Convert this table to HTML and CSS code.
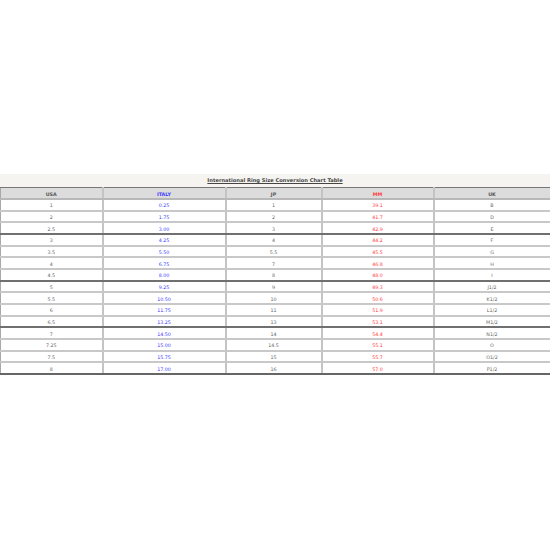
FILE: index.html
```html
<!DOCTYPE html>
<html>
<head>
<meta charset="utf-8">
<link rel="stylesheet" href="styles.css">
</head>
<body>
<div class="page">
  <div class="caption">International Ring Size Conversion Chart Table</div>
  <table class="chart">
    <colgroup>
      <col class="c1"><col class="c2"><col class="c3"><col class="c4"><col class="c5">
    </colgroup>
    <thead>
      <tr><th>USA</th><th class="it">ITALY</th><th>JP</th><th class="mm">MM</th><th>UK</th></tr>
    </thead>
    <tbody>
      <tr><td>1</td><td class="it">0.25</td><td>1</td><td class="mm">39.1</td><td>B</td></tr>
      <tr><td>2</td><td class="it">1.75</td><td>2</td><td class="mm">41.7</td><td>D</td></tr>
      <tr class="end"><td>2.5</td><td class="it">3.00</td><td>3</td><td class="mm">42.9</td><td>E</td></tr>
      <tr><td>3</td><td class="it">4.25</td><td>4</td><td class="mm">44.2</td><td>F</td></tr>
      <tr><td>3.5</td><td class="it">5.50</td><td>5.5</td><td class="mm">45.5</td><td>G</td></tr>
      <tr><td>4</td><td class="it">6.75</td><td>7</td><td class="mm">46.8</td><td>H</td></tr>
      <tr class="end"><td>4.5</td><td class="it">8.00</td><td>8</td><td class="mm">48.0</td><td>I</td></tr>
      <tr><td>5</td><td class="it">9.25</td><td>9</td><td class="mm">49.3</td><td>J1/2</td></tr>
      <tr><td>5.5</td><td class="it">10.50</td><td>10</td><td class="mm">50.6</td><td>K1/2</td></tr>
      <tr><td>6</td><td class="it">11.75</td><td>11</td><td class="mm">51.9</td><td>L1/2</td></tr>
      <tr class="end"><td>6.5</td><td class="it">13.25</td><td>13</td><td class="mm">53.1</td><td>M1/2</td></tr>
      <tr><td>7</td><td class="it">14.50</td><td>14</td><td class="mm">54.4</td><td>N1/2</td></tr>
      <tr><td>7.25</td><td class="it">15.00</td><td>14.5</td><td class="mm">55.1</td><td>O</td></tr>
      <tr><td>7.5</td><td class="it">15.75</td><td>15</td><td class="mm">55.7</td><td>O1/2</td></tr>
      <tr class="last"><td>8</td><td class="it">17.00</td><td>16</td><td class="mm">57.0</td><td>P1/2</td></tr>
    </tbody>
  </table>
</div>
</body>
</html>
```

FILE: styles.css
```css
html, body {
  margin: 0;
  padding: 0;
  background: #ffffff;
}

.page {
  padding-top: 174px;
  font-family: "DejaVu Sans", Verdana, sans-serif;
}

.caption {
  background: #f5f4f0;
  height: 13px;
  line-height: 12px;
  text-align: center;
  font-size: 5.15px;
  font-weight: bold;
  color: #444444;
  text-decoration: underline;
}

.chart {
  width: 550px;
  border-collapse: collapse;
  table-layout: fixed;
  font-size: 4.8px;
  line-height: 6px;
  color: #666666;
  text-align: center;
}

.c1 { width: 102px; }
.c2 { width: 123px; }
.c3 { width: 96px; }
.c4 { width: 112px; }
.c5 { width: 117px; }

.chart th,
.chart td {
  padding: 3px 0 0;
  border-left: 2px solid #c4c4c4;
  border-right: 2px solid #c4c4c4;
  border-bottom: 2px solid #c8c8c8;
}

.chart th:first-child,
.chart td:first-child {
  border-left: 1px solid #a8a8a8;
  border-right: 1px solid #333333;
}

.chart th {
  height: 7px;
  background: #dcdcdc;
  border-top: 1px solid #777777;
  border-bottom: 2px solid #b8b8b8;
  font-weight: bold;
  color: #555555;
}

.chart td {
  height: 6.67px;
}

.chart tr.end td {
  border-bottom: 2px solid #707070;
}

.chart tr.last td {
  border-bottom: 2px solid #666666;
}

.chart .it { color: #3c3cff; }
.chart .mm { color: #ff3a3a; }
```
